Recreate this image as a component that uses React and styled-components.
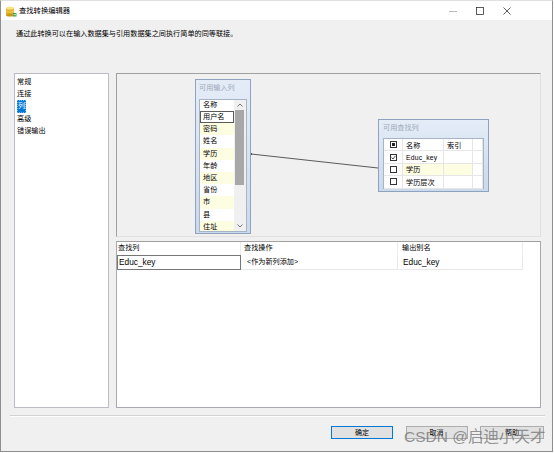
import styled, { createGlobalStyle } from 'styled-components';

const GlobalStyle = createGlobalStyle`
  html, body {
    margin: 0;
    padding: 0;
    background: #fff;
  }
  body {
    font-family: "Liberation Sans", "Noto Sans CJK SC", sans-serif;
    font-size: 7.15px;
    color: #000;
  }
`;

const Window = styled.div`
  position: relative;
  width: 553px;
  height: 452px;
  box-sizing: border-box;
  border: 1px solid #8e8e8e;
  border-top-color: #e0e0e0;
  background: #f0f0f0;
  display: flex;
  flex-direction: column;
  overflow: hidden;
`;

const TitleBar = styled.div`
  height: 19px;
  flex: none;
  background: #fff;
  display: flex;
  align-items: center;
  padding-left: 4px;
  gap: 2px;
`;

const TitleText = styled.span`
  line-height: 10px;
  font-size: 7.3px;
`;

const Controls = styled.div`
  margin-left: auto;
  display: flex;
  align-items: center;
  gap: 19px;
  padding-right: 41px;
`;

const Description = styled.p`
  margin: 0;
  height: 53px;
  flex: none;
  box-sizing: border-box;
  padding: 9px 0 0 15px;
  line-height: 10px;
`;

const Main = styled.div`
  display: flex;
  gap: 7px;
  padding-left: 13px;
  height: 335px;
  flex: none;
`;

const NavList = styled.ul`
  list-style: none;
  margin: 0;
  width: 95px;
  box-sizing: border-box;
  border: 1px solid #bcbcc6;
  background: #fff;
  padding: 2px 0 0 2px;
`;

const NavItem = styled.li`
  height: 12.2px;
  line-height: 12.2px;
`;

const Selected = styled.span`
  display: inline-block;
  background: #0078d7;
  color: #fff;
  padding: 0 1px;
  outline: 1px dotted #7fb6e8;
  outline-offset: -1px;
`;

const RightPanel = styled.div`
  width: 425px;
  display: flex;
  flex-direction: column;
  gap: 4px;
`;

const Designer = styled.div`
  position: relative;
  height: 164px;
  flex: none;
  box-sizing: border-box;
  border: 1px solid;
  border-color: #a0a0a0 #e0e0e0 #e0e0e0 #a0a0a0;
  background: #f0f0f0;
`;

const Connector = styled.svg`
  position: absolute;
  left: 0;
  top: 0;
  width: 100%;
  height: 100%;
  pointer-events: none;
`;

const Node = styled.div`
  position: absolute;
  left: ${(p) => p.$x}px;
  top: ${(p) => p.$y}px;
  width: ${(p) => p.$w}px;
  height: ${(p) => p.$h}px;
  box-sizing: border-box;
  border: 1px solid #8fa3bf;
  background: linear-gradient(#e4ecf7, #cbd9ed);
  padding: 0 ${(p) => p.$pad}px;
  display: flex;
  flex-direction: column;
`;

const NodeTitle = styled.div`
  height: ${(p) => p.$h}px;
  line-height: ${(p) => p.$h - 2}px;
  color: #9ea9b9;
  flex: none;
`;

const ScrollList = styled.div`
  display: flex;
  height: 133px;
  box-sizing: border-box;
  border: 1px solid #a7b4c6;
  background: #fff;
`;

const ListColumn = styled.div`
  flex: 1;
  overflow: hidden;
`;

const ListHeader = styled.div`
  height: 11px;
  line-height: 11px;
  padding-left: 3px;
`;

const ListRow = styled.div`
  height: 12.2px;
  box-sizing: border-box;
  padding-left: ${(p) => (p.$focus ? 2 : 3)}px;
  background: ${(p) => (p.$alt ? '#fdfde2' : '#fff')};
  border: ${(p) => (p.$focus ? '1px solid #5a5a5a' : 'none')};
  line-height: ${(p) => (p.$focus ? '10.2px' : '12.2px')};
`;

const Scrollbar = styled.div`
  position: relative;
  width: 12px;
  background: #f0f0f0;
`;

const Thumb = styled.div`
  position: absolute;
  left: 1px;
  right: 2px;
  top: 10px;
  height: 75px;
  background: #a8a8a8;
`;

const Arrow = styled.svg`
  position: absolute;
  left: 3px;
  ${(p) => (p.$down ? 'bottom: 3px;' : 'top: 3px;')}
`;

const LookupTable = styled.div`
  display: grid;
  grid-template-columns: 19px 41px 29px 1fr;
  grid-auto-rows: 12.4px;
  height: 51px;
  box-sizing: border-box;
  border: 1px solid #a7b4c6;
  background: #fff;
`;

const LCell = styled.div`
  display: flex;
  align-items: center;
  justify-content: ${(p) => (p.$center ? 'center' : 'flex-start')};
  padding-left: ${(p) => (p.$center ? 0 : 3)}px;
  border-right: 1px solid #e6e6e6;
  border-bottom: 1px solid #e6e6e6;
  background: ${(p) => (p.$alt ? '#fdfde2' : '#fff')};
  white-space: nowrap;
  overflow: hidden;
`;

const Box = styled.span`
  position: relative;
  width: 7px;
  height: 7px;
  box-sizing: border-box;
  border: 1px solid #333;
  background: #fff;
  display: flex;
  align-items: center;
  justify-content: center;
`;

const BoxFill = styled.span`
  width: 3px;
  height: 3px;
  background: #222;
`;

const Grid = styled.div`
  flex: 1;
  background: #fff;
  border: 1px solid #a8a8b2;
  border-top-color: #a0a0a0;
`;

const GridRow = styled.div`
  display: grid;
  grid-template-columns: 124px 157px 125px;
  height: ${(p) => p.$h}px;
`;

const HeadCell = styled.div`
  line-height: 13px;
  padding-left: ${(p) => p.$pad}px;
  border-right: 1px solid #ececec;
`;

const DataCell = styled.div`
  box-sizing: border-box;
  line-height: 12px;
  padding-left: ${(p) => p.$pad}px;
  border: 1px solid;
  border-color: ${(p) => (p.$focus ? '#767676' : 'transparent #e8e8e8 #e8e8e8 transparent')};
  white-space: nowrap;
`;

const Latin = styled.span`
  font-size: ${(p) => p.$size || 8.3}px;
  letter-spacing: ${(p) => (p.$mono ? '0.2px' : '0')};
`;

const Separator = styled.div`
  margin: 7px 7px 0 9px;
  border-top: 1px solid #d2d2d2;
  border-bottom: 1px solid #fdfdfd;
`;

const ButtonRow = styled.div`
  display: flex;
  justify-content: flex-end;
  gap: 12.5px;
  padding: 9px 8px 0 0;
`;

const Button = styled.button`
  width: ${(p) => p.$w}px;
  height: 13px;
  padding: 0;
  box-sizing: border-box;
  font: inherit;
  font-size: 7px;
  line-height: 11px;
  color: #000;
  background: #e1e1e1;
  border: 1px solid ${(p) => (p.$primary ? '#0078d7' : '#adadad')};
`;

const Watermark = styled.div`
  position: absolute;
  left: 403px;
  top: 427px;
  font-family: "Liberation Sans", "Noto Sans CJK SC", sans-serif;
  font-size: 15.5px;
  line-height: 18px;
  color: rgba(120, 120, 120, 0.8);
  white-space: nowrap;
  pointer-events: none;
`;

const inputColumns = ['密码', '姓名', '学历', '年龄', '地区', '省份', '市', '县', '住址'];

function AppIcon() {
  return (
    <svg width="12" height="12" viewBox="0 0 12 12">
      <rect x="1" y="3" width="8" height="7" fill="#e2b52c" />
      <ellipse cx="5" cy="10" rx="4" ry="1.5" fill="#c9971b" />
      <ellipse cx="5" cy="3" rx="4" ry="1.5" fill="#f8e48a" />
      <path d="M1 6.2 Q5 8 9 6.2" stroke="#f4d970" strokeWidth="0.6" fill="none" />
      <path d="M8 8 L11.5 8 L11.5 11.5 L8 11.5 Z" fill="#3aa343" />
      <path d="M8.5 9.7 L11 9.7" stroke="#fff" strokeWidth="0.8" />
    </svg>
  );
}

function WindowControls() {
  return (
    <Controls>
      <svg width="8" height="8" viewBox="0 0 8 8">
        <path d="M0 4.5 H8" stroke="#aaa" strokeWidth="0.8" />
      </svg>
      <svg width="8" height="8" viewBox="0 0 8 8">
        <rect x="0.5" y="0.5" width="7" height="7" fill="none" stroke="#333" strokeWidth="0.8" />
      </svg>
      <svg width="8" height="8" viewBox="0 0 8 8">
        <path d="M0.5 0.5 L7.5 7.5 M7.5 0.5 L0.5 7.5" stroke="#333" strokeWidth="0.8" />
      </svg>
    </Controls>
  );
}

function InputNode() {
  return (
    <Node $x={78} $y={5} $w={56} $h={155} $pad={3}>
      <NodeTitle $h={19}>可用输入列</NodeTitle>
      <ScrollList>
        <ListColumn>
          <ListHeader>名称</ListHeader>
          <ListRow $focus>用户名</ListRow>
          {inputColumns.map((name, i) => (
            <ListRow key={name} $alt={i % 2 === 0}>
              {name}
            </ListRow>
          ))}
        </ListColumn>
        <Scrollbar>
          <Arrow width="6" height="4" viewBox="0 0 6 4">
            <path d="M0.5 3.5 L3 1 L5.5 3.5" stroke="#555" strokeWidth="0.8" fill="none" />
          </Arrow>
          <Thumb />
          <Arrow $down width="6" height="4" viewBox="0 0 6 4">
            <path d="M0.5 0.5 L3 3 L5.5 0.5" stroke="#555" strokeWidth="0.8" fill="none" />
          </Arrow>
        </Scrollbar>
      </ScrollList>
    </Node>
  );
}

function Check() {
  return (
    <svg width="5" height="5" viewBox="0 0 5 5">
      <path d="M0.5 2.5 L2 4 L4.5 0.8" stroke="#222" strokeWidth="0.8" fill="none" />
    </svg>
  );
}

function LookupNode() {
  return (
    <Node $x={261} $y={45} $w={111} $h={73} $pad={4}>
      <NodeTitle $h={18}>可用查找列</NodeTitle>
      <LookupTable>
        <LCell $center>
          <Box>
            <BoxFill />
          </Box>
        </LCell>
        <LCell>名称</LCell>
        <LCell>索引</LCell>
        <LCell />

        <LCell $center>
          <Box>
            <Check />
          </Box>
        </LCell>
        <LCell>
          <Latin $size={6.8} $mono>Educ_key</Latin>
        </LCell>
        <LCell />
        <LCell />

        <LCell $center>
          <Box />
        </LCell>
        <LCell $alt>学历</LCell>
        <LCell $alt />
        <LCell />

        <LCell $center>
          <Box />
        </LCell>
        <LCell>学历层次</LCell>
        <LCell />
        <LCell />
      </LookupTable>
    </Node>
  );
}

export default function App() {
  return (
    <>
      <GlobalStyle />
      <Window>
        <TitleBar>
          <AppIcon />
          <TitleText>查找转换编辑器</TitleText>
          <WindowControls />
        </TitleBar>

        <Description>通过此转换可以在输入数据集与引用数据集之间执行简单的同等联接。</Description>

        <Main>
          <NavList>
            <NavItem>常规</NavItem>
            <NavItem>连接</NavItem>
            <NavItem>
              <Selected>列</Selected>
            </NavItem>
            <NavItem>高级</NavItem>
            <NavItem>错误输出</NavItem>
          </NavList>

          <RightPanel>
            <Designer>
              <Connector>
                <circle cx="134" cy="80" r="0.9" fill="#222" />
                <line x1="134" y1="80" x2="261" y2="94" stroke="#333" strokeWidth="0.8" />
              </Connector>
              <InputNode />
              <LookupNode />
            </Designer>

            <Grid>
              <GridRow $h={13}>
                <HeadCell $pad={1}>查找列</HeadCell>
                <HeadCell $pad={3}>查找操作</HeadCell>
                <HeadCell $pad={4}>输出别名</HeadCell>
              </GridRow>
              <GridRow $h={13}>
                <DataCell $focus $pad={1}>
                  <Latin>Educ_key</Latin>
                </DataCell>
                <DataCell $pad={5}>&lt;作为新列添加&gt;</DataCell>
                <DataCell $pad={4}>
                  <Latin>Educ_key</Latin>
                </DataCell>
              </GridRow>
            </Grid>
          </RightPanel>
        </Main>

        <Separator />

        <ButtonRow>
          <Button $primary $w={62}>确定</Button>
          <Button $w={62}>取消</Button>
          <Button $w={64}>帮助</Button>
        </ButtonRow>

        <Watermark>CSDN @启迪小天才</Watermark>
      </Window>
    </>
  );
}
